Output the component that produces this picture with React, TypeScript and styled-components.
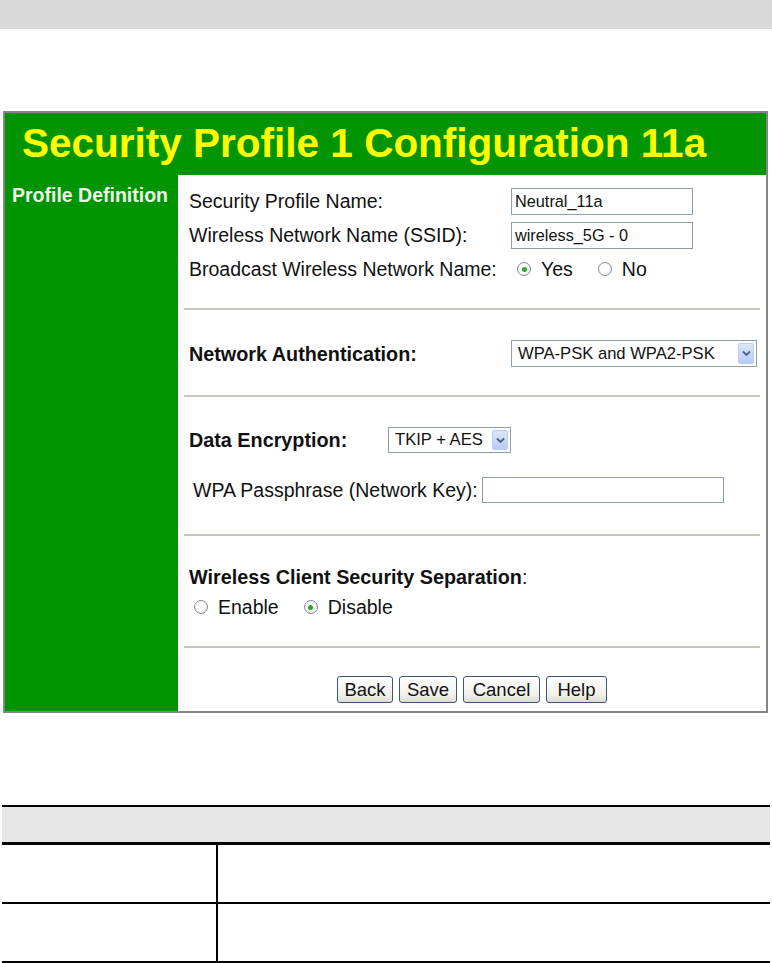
import React from 'react'
import styled, { createGlobalStyle } from 'styled-components'

const GlobalStyle = createGlobalStyle`
  html, body {
    margin: 0;
    padding: 0;
    background: #ffffff;
    font-family: "Liberation Sans", Arial, sans-serif;
    color: #111111;
  }
`

type RadioProps = { checked?: boolean; label: string }

const Radio: React.FC<RadioProps> = ({ checked, label }) => (
  <RadioItem>
    <RadioCircle>{checked && <RadioDot />}</RadioCircle>
    <span>{label}</span>
  </RadioItem>
)

const Dropdown: React.FC<{ value: string; width: number; height: number }> = ({
  value,
  width,
  height,
}) => (
  <SelectBox style={{ width, height }}>
    <SelectText>{value}</SelectText>
    <ArrowButton>
      <svg width="9" height="7" viewBox="0 0 9 7">
        <path d="M1 1.5 L4.5 5 L8 1.5" fill="none" stroke="#4d6185" strokeWidth="1.8" />
      </svg>
    </ArrowButton>
  </SelectBox>
)

export default function App() {
  return (
    <Page>
      <GlobalStyle />
      <TopBar />
      <Frame>
        <TitleBar>
          <Title>Security Profile 1 Configuration 11a</Title>
        </TitleBar>
        <Body>
          <Sidebar>
            <SideLabel>Profile Definition</SideLabel>
          </Sidebar>
          <Content>
            <Section $pad="9px 0 22px">
              <FieldRow>
                <Label $w={322}>Security Profile Name:</Label>
                <TextBox $w={182}>Neutral_11a</TextBox>
              </FieldRow>
              <FieldRow>
                <Label $w={322}>Wireless Network Name (SSID):</Label>
                <TextBox $w={182}>wireless_5G - 0</TextBox>
              </FieldRow>
              <FieldRow>
                <Label $w={322}>Broadcast Wireless Network Name:</Label>
                <RadioGroup $indent={6}>
                  <Radio checked label="Yes" />
                  <Radio label="No" />
                </RadioGroup>
              </FieldRow>
            </Section>
            <Divider />
            <Section $pad="30px 0 28px">
              <FieldRow $h={27}>
                <Label $w={322} $bold>Network Authentication:</Label>
                <Dropdown value="WPA-PSK and WPA2-PSK" width={246} height={27} />
              </FieldRow>
            </Section>
            <Divider />
            <Section $pad="30px 0 31px">
              <FieldRow $h={26}>
                <Label $w={199} $bold>Data Encryption:</Label>
                <Dropdown value="TKIP + AES" width={123} height={26} />
              </FieldRow>
              <FieldRow $h={26} $top={24}>
                <Label $indent={4}>WPA Passphrase (Network Key):</Label>
                <TextBox $w={242} $h={26} $gap={4} />
              </FieldRow>
            </Section>
            <Divider />
            <Section $pad="29px 0 27px">
              <FieldRow $h={24}>
                <Label>
                  <strong>Wireless Client Security Separation</strong>:
                </Label>
              </FieldRow>
              <FieldRow $h={24} $top={6}>
                <RadioGroup $indent={5}>
                  <Radio label="Enable" />
                  <Radio checked label="Disable" />
                </RadioGroup>
              </FieldRow>
            </Section>
            <Divider />
            <ButtonBar>
              <PushButton $w={56}>Back</PushButton>
              <PushButton $w={58}>Save</PushButton>
              <PushButton $w={77}>Cancel</PushButton>
              <PushButton $w={61}>Help</PushButton>
            </ButtonBar>
          </Content>
        </Body>
      </Frame>

      <InfoTable>
        <HeaderCell />
        <BodyCell />
        <BodyCell $last />
        <BodyCell $bottom />
        <BodyCell $last $bottom />
      </InfoTable>
    </Page>
  )
}

const Page = styled.div`
  width: 772px;
  min-height: 963px;
  display: flex;
  flex-direction: column;
`

const TopBar = styled.div`
  height: 29px;
  background: #d9d9d9;
`

const Frame = styled.div`
  margin: 82px 0 0 3px;
  width: 761px;
  border: 2px solid #858585;
  background: #009400;
  display: flex;
  flex-direction: column;
`

const TitleBar = styled.div`
  height: 62px;
  display: flex;
  align-items: center;
  padding-left: 17px;
`

const Title = styled.h1`
  margin: 0;
  font-size: 40.5px;
  font-weight: bold;
  color: #ffff00;
  line-height: 1;
  padding-bottom: 2px;
`

const Body = styled.div`
  display: flex;
  height: 536px;
`

const Sidebar = styled.div`
  width: 173px;
  padding: 8px 0 0 7px;
  box-sizing: border-box;
`

const SideLabel = styled.div`
  font-size: 19.5px;
  font-weight: bold;
  line-height: 24px;
  color: #eef6ea;
  white-space: nowrap;
`

const Content = styled.div`
  flex: 1;
  background: #ffffff;
  display: flex;
  flex-direction: column;
`

const Section = styled.div<{ $pad: string }>`
  padding: ${p => p.$pad};
  padding-left: 11px;
  display: flex;
  flex-direction: column;
`

const FieldRow = styled.div<{ $h?: number; $top?: number }>`
  display: flex;
  align-items: center;
  height: ${p => p.$h ?? 34}px;
  margin-top: ${p => p.$top ?? 0}px;
`

const Label = styled.div<{ $w?: number; $bold?: boolean; $indent?: number }>`
  font-size: ${p => (p.$bold ? 19.8 : 19.5)}px;
  line-height: 24px;
  white-space: nowrap;
  font-weight: ${p => (p.$bold ? 'bold' : 'normal')};
  width: ${p => (p.$w ? `${p.$w}px` : 'auto')};
  flex: none;
  padding-left: ${p => p.$indent ?? 0}px;
  box-sizing: border-box;

  strong {
    font-weight: bold;
    font-size: 19.8px;
  }
`

const TextBox = styled.div<{ $w: number; $h?: number; $gap?: number }>`
  width: ${p => p.$w}px;
  height: ${p => p.$h ?? 27}px;
  margin-left: ${p => p.$gap ?? 0}px;
  box-sizing: border-box;
  border: 1px solid #8c9db0;
  background: #ffffff;
  font-size: 16.3px;
  line-height: 25px;
  padding-left: 3px;
  color: #111;
`

const SelectBox = styled.div`
  box-sizing: border-box;
  border: 1px solid #8c9db0;
  background: #ffffff;
  display: flex;
  align-items: center;
  padding: 2px;
`

const SelectText = styled.span`
  flex: 1;
  font-size: 16.6px;
  padding-left: 4px;
  white-space: nowrap;
  color: #111;
`

const ArrowButton = styled.span`
  width: 16px;
  align-self: stretch;
  box-sizing: border-box;
  border: 1px solid #bccdf3;
  border-radius: 2px;
  background: linear-gradient(#dbe6fd, #b7cbf7);
  display: flex;
  align-items: center;
  justify-content: center;
`

const RadioGroup = styled.div<{ $indent: number }>`
  display: flex;
  gap: 25px;
  margin-left: ${p => p.$indent}px;
  font-size: 19.5px;
`

const RadioItem = styled.label`
  display: flex;
  align-items: center;
  gap: 10px;
`

const RadioCircle = styled.span`
  width: 14px;
  height: 14px;
  box-sizing: border-box;
  border-radius: 50%;
  border: 1px solid #7d8c99;
  background: radial-gradient(circle at 40% 40%, #ffffff 40%, #e2e2dc 100%);
  display: flex;
  align-items: center;
  justify-content: center;
`

const RadioDot = styled.span`
  width: 5px;
  height: 5px;
  border-radius: 50%;
  background: #2ea52e;
`

const Divider = styled.div`
  height: 2px;
  margin: 0 6px;
  background: #c9c7bb;
  flex: none;
`

const ButtonBar = styled.div`
  display: flex;
  justify-content: center;
  gap: 6px;
  padding: 28px 0 8px;
`

const PushButton = styled.button<{ $w: number }>`
  width: ${p => p.$w}px;
  height: 27px;
  padding: 0;
  font-family: "Liberation Sans", Arial, sans-serif;
  font-size: 18.5px;
  color: #111;
  border: 1px solid #3b5677;
  border-radius: 3px;
  background: linear-gradient(#ffffff, #f1f0ea 70%, #dcdad0);
`

const InfoTable = styled.div`
  margin: 92px 0 0 2px;
  width: 768px;
  display: grid;
  grid-template-columns: 216px 1fr;
  grid-template-rows: 38px 57px 59px;
  border-top: 2px solid #000;
  border-bottom: 2px solid #000;
`

const HeaderCell = styled.div`
  grid-column: 1 / 3;
  background: #e6e6e6;
  border-bottom: 3px solid #000;
`

const BodyCell = styled.div<{ $last?: boolean; $bottom?: boolean }>`
  border-right: ${p => (p.$last ? 'none' : '2px solid #000')};
  border-top: ${p => (p.$bottom ? '2px solid #000' : 'none')};
`
